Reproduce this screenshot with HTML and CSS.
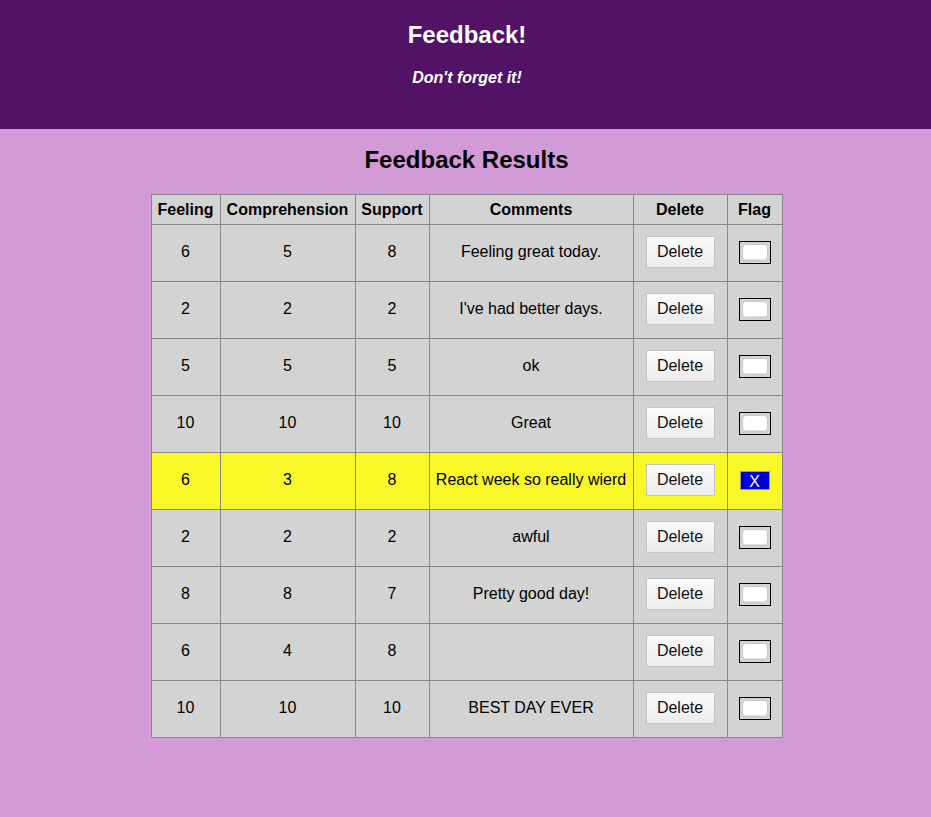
FILE: index.html
```html
<!DOCTYPE html>
<html>
<head>
<meta charset="utf-8">
<title>Feedback</title>
<link rel="stylesheet" href="styles.css">
</head>
<body>
<header class="app-header">
  <h1 class="app-title">Feedback!</h1>
  <p class="app-sub">Don't forget it!</p>
</header>
<main class="content">
  <h2 class="results-title">Feedback Results</h2>
  <table class="results">
    <colgroup>
      <col class="c-feel"><col class="c-comp"><col class="c-sup"><col class="c-com"><col class="c-del"><col class="c-flag">
    </colgroup>
    <thead>
      <tr><th>Feeling</th><th>Comprehension</th><th>Support</th><th>Comments</th><th>Delete</th><th>Flag</th></tr>
    </thead>
    <tbody>
      <tr><td>6</td><td>5</td><td>8</td><td>Feeling great today.</td><td><button class="del-btn">Delete</button></td><td><span class="flag-btn"><span class="flag-inner"></span></span></td></tr>
      <tr><td>2</td><td>2</td><td>2</td><td>I've had better days.</td><td><button class="del-btn">Delete</button></td><td><span class="flag-btn"><span class="flag-inner"></span></span></td></tr>
      <tr><td>5</td><td>5</td><td>5</td><td>ok</td><td><button class="del-btn">Delete</button></td><td><span class="flag-btn"><span class="flag-inner"></span></span></td></tr>
      <tr><td>10</td><td>10</td><td>10</td><td>Great</td><td><button class="del-btn">Delete</button></td><td><span class="flag-btn"><span class="flag-inner"></span></span></td></tr>
      <tr class="flagged"><td>6</td><td>3</td><td>8</td><td>React week so really wierd</td><td><button class="del-btn">Delete</button></td><td><span class="flag-on">X</span></td></tr>
      <tr><td>2</td><td>2</td><td>2</td><td>awful</td><td><button class="del-btn">Delete</button></td><td><span class="flag-btn"><span class="flag-inner"></span></span></td></tr>
      <tr><td>8</td><td>8</td><td>7</td><td>Pretty good day!</td><td><button class="del-btn">Delete</button></td><td><span class="flag-btn"><span class="flag-inner"></span></span></td></tr>
      <tr><td>6</td><td>4</td><td>8</td><td></td><td><button class="del-btn">Delete</button></td><td><span class="flag-btn"><span class="flag-inner"></span></span></td></tr>
      <tr><td>10</td><td>10</td><td>10</td><td>BEST DAY EVER</td><td><button class="del-btn">Delete</button></td><td><span class="flag-btn"><span class="flag-inner"></span></span></td></tr>
    </tbody>
  </table>
</main>
</body>
</html>
```

FILE: styles.css
```css
html, body {
  margin: 0;
  padding: 0;
}
body {
  background: #d29ad6;
  font-family: "Liberation Sans", Arial, Helvetica, sans-serif;
  font-size: 16px;
  color: #000;
  min-height: 817px;
}
.app-header {
  background: #521266;
  height: 129px;
  box-sizing: border-box;
  padding-top: 21px;
  padding-left: 3px;
  text-align: center;
  color: #fff;
}
.app-title {
  margin: 0;
  font-size: 24px;
  line-height: 28px;
  font-weight: bold;
}
.app-sub {
  margin: 20px 0 0;
  font-size: 16px;
  line-height: 18px;
  font-weight: bold;
  font-style: italic;
}
.content {
  display: flex;
  flex-direction: column;
  align-items: center;
  padding-left: 2px;
}
.results-title {
  margin: 17px 0 20px;
  font-size: 24px;
  line-height: 28px;
  font-weight: bold;
}
.results {
  border-collapse: collapse;
  table-layout: fixed;
  width: 631px;
  background: #d3d3d3;
}
.c-feel { width: 69px; }
.c-comp { width: 135px; }
.c-sup { width: 74px; }
.c-com { width: 204px; }
.c-del { width: 94px; }
.c-flag { width: 55px; }
.results th, .results td {
  border: 1px solid #888;
  text-align: center;
  vertical-align: middle;
  padding: 0;
  white-space: nowrap;
}
.results th {
  height: 29px;
  font-weight: bold;
  line-height: 18px;
}
.results td {
  height: 54px;
  line-height: 18px;
  padding-bottom: 2px;
}
.results tr.flagged td {
  background: #f8f829;
}
.del-btn {
  display: inline-block;
  vertical-align: middle;
  width: 69px;
  height: 32px;
  box-sizing: border-box;
  border: 1px solid #c4c4c4;
  border-radius: 0;
  background: linear-gradient(#fbfbfb, #ececec);
  font-family: "Liberation Sans", Arial, Helvetica, sans-serif;
  font-size: 16px;
  color: #111;
  padding: 0;
  margin: 0;
}
.flag-btn {
  display: inline-flex;
  vertical-align: middle;
  width: 32px;
  height: 23px;
  box-sizing: border-box;
  border: 1px solid #000;
  padding: 2px;
}
.flag-inner {
  flex: 1;
  background: #fff;
  border: 1px solid #c8c8c8;
  border-radius: 4px;
  box-shadow: inset 0 -1px 0 #e6e6e6;
}
.flag-on {
  display: inline-flex;
  align-items: center;
  justify-content: center;
  vertical-align: middle;
  width: 30px;
  height: 19px;
  box-sizing: border-box;
  background: #0000d2;
  border: 1px solid #9a9a9a;
  color: #fff;
  font-size: 16px;
  line-height: 16px;
  padding-top: 3px;
}
```
